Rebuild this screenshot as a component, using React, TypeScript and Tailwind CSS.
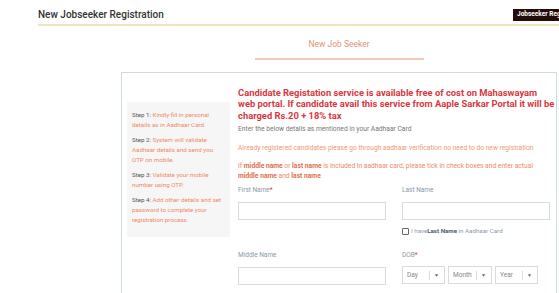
import React from 'react';

const steps = [
  { label: 'Step 1:', text: 'Kindly fill in personal details as in Aadhaar Card.' },
  { label: 'Step 2:', text: 'System will validate Aadhaar details and send you OTP on mobile.' },
  { label: 'Step 3:', text: 'Validate your mobile number using OTP.' },
  { label: 'Step 4:', text: 'Add other details and set password to complete your registration process.' },
];

const Select: React.FC<{ label: string; w: string }> = ({ label, w }) => (
  <div className={`${w} h-[18px] border border-[#d6dcdc] flex items-center justify-between pl-[4px] pr-[5px] text-[6.5px] text-[#888]`}>
    <span>{label}</span>
    <span className="flex items-center gap-[4px]">
      <span className="w-px h-[9px] bg-[#dcdcdc]" />
      <span className="text-[5px] text-[#666]">▼</span>
    </span>
  </div>
);

const App: React.FC = () => {
  return (
    <div className="w-[559px] h-[293px] overflow-hidden bg-white font-['Roboto',sans-serif]">
      {/* Header */}
      <div className="pl-[38px] pt-[9px]">
        <div className="flex items-center justify-between pb-[3px] border-b-2 border-[#ede6bf] mr-[-40px]">
          <h1 className="text-[10px] font-medium text-[#333] leading-[12px]">New Jobseeker Registration</h1>
          <button className="bg-[#240d08] text-white text-[6.5px] font-bold h-[12px] px-[4px] w-[86px] text-left">
            Jobseeker Registration
          </button>
        </div>
      </div>

      {/* Tab */}
      <div className="flex justify-center ml-[121px] mr-[2px] mt-[12px]">
        <div className="w-[169px] text-center text-[8.5px] text-[#e0957a] pb-[7px] border-b-2 border-[#f2c6b8]">
          New Job Seeker
        </div>
      </div>

      {/* Box */}
      <div className="ml-[121px] mr-[2px] mt-[12px] border border-[#cddbdb] flex gap-[8px] pl-[5px] pr-[6px] pt-[14px]">
        <div className="w-[103px] shrink-0 mt-[15px] self-start bg-[#f6f6f6] px-[5px] pt-[8px] pb-[12px] space-y-[5px] text-[6.2px] leading-[10px]">
          {steps.map((s) => (
            <p key={s.label}>
              <span className="text-[#555]">{s.label}</span>{' '}
              <span className="text-[#ee8a66]">{s.text}</span>
            </p>
          ))}
        </div>

        <div className="flex-1 min-w-0">
          <p className="text-[9.4px] font-bold text-[#d9383e] leading-[11.5px] mr-[-16px] whitespace-nowrap">
            Candidate Registation service is available free of cost on Mahaswayam
            <br />
            web portal. If candidate avail this service from Aaple Sarkar Portal it will be
            <br />
            charged Rs.20 + 18% tax
          </p>
          <p className="text-[6.7px] text-[#777] mt-[4px] leading-[9px]">Enter the below details as mentioned in your Aadhaar Card</p>
          <p className="text-[6.7px] text-[#ee9a78] mt-[10px] leading-[9px]">
            Already registered candidates please go through aadhaar verification no need to do new registration
          </p>
          <p className="text-[6.7px] text-[#ee8a66] mt-[8px] leading-[10px]">
            If <b className="text-[#e0704a]">middle name</b> or <b className="text-[#e0704a]">last name</b> is included in aadhaar card, please tick in check boxes and enter actual{' '}
            <b className="text-[#e0704a]">middle name</b> and <b className="text-[#e0704a]">last name</b>
          </p>

          <div className="grid grid-cols-2 gap-x-[16px] mt-[4px] text-[6.5px] leading-[10px]">
            <div>
              <label className="block text-[#8a9aa8]">First Name<span className="text-[#e04040]">*</span></label>
              <div className="h-[18px] border border-[#d6dcdc] mt-[7px]" />
            </div>
            <div>
              <label className="block text-[#8a9aa8]">Last Name</label>
              <div className="h-[18px] border border-[#d6dcdc] mt-[7px]" />
              <div className="flex items-center gap-[2px] mt-[7px] h-[8px] text-[6.2px] text-[#8a9aa8]">
                <span className="w-[7px] h-[7px] border border-[#666] rounded-[1px]" />
                <span>I have<b className="text-[#4a5a6a]">Last Name</b> in Aadhaar Card</span>
              </div>
            </div>
          </div>

          <div className="grid grid-cols-2 gap-x-[16px] mt-[15px] text-[6.5px] leading-[10px]">
            <div>
              <label className="block text-[#8a9aa8]">Middle Name</label>
              <div className="h-[18px] border border-[#d6dcdc] mt-[7px]" />
              <div className="flex items-center gap-[2px] mt-[6px] text-[6.2px] text-[#bcc6cc]">
                <span className="w-[7px] h-[7px] border border-[#bbb] rounded-[1px]" />
                <span>I have<b>Middle Name</b> in Aadhaar Card</span>
              </div>
            </div>
            <div>
              <label className="block text-[#8a9aa8]">DOB<span className="text-[#e04040]">*</span></label>
              <div className="flex gap-[3px] mt-[6px]">
                <Select label="Day" w="w-[43px]" />
                <Select label="Month" w="w-[44px]" />
                <Select label="Year" w="w-[43px]" />
              </div>
            </div>
          </div>
        </div>
      </div>
    </div>
  );
};

export default App;
